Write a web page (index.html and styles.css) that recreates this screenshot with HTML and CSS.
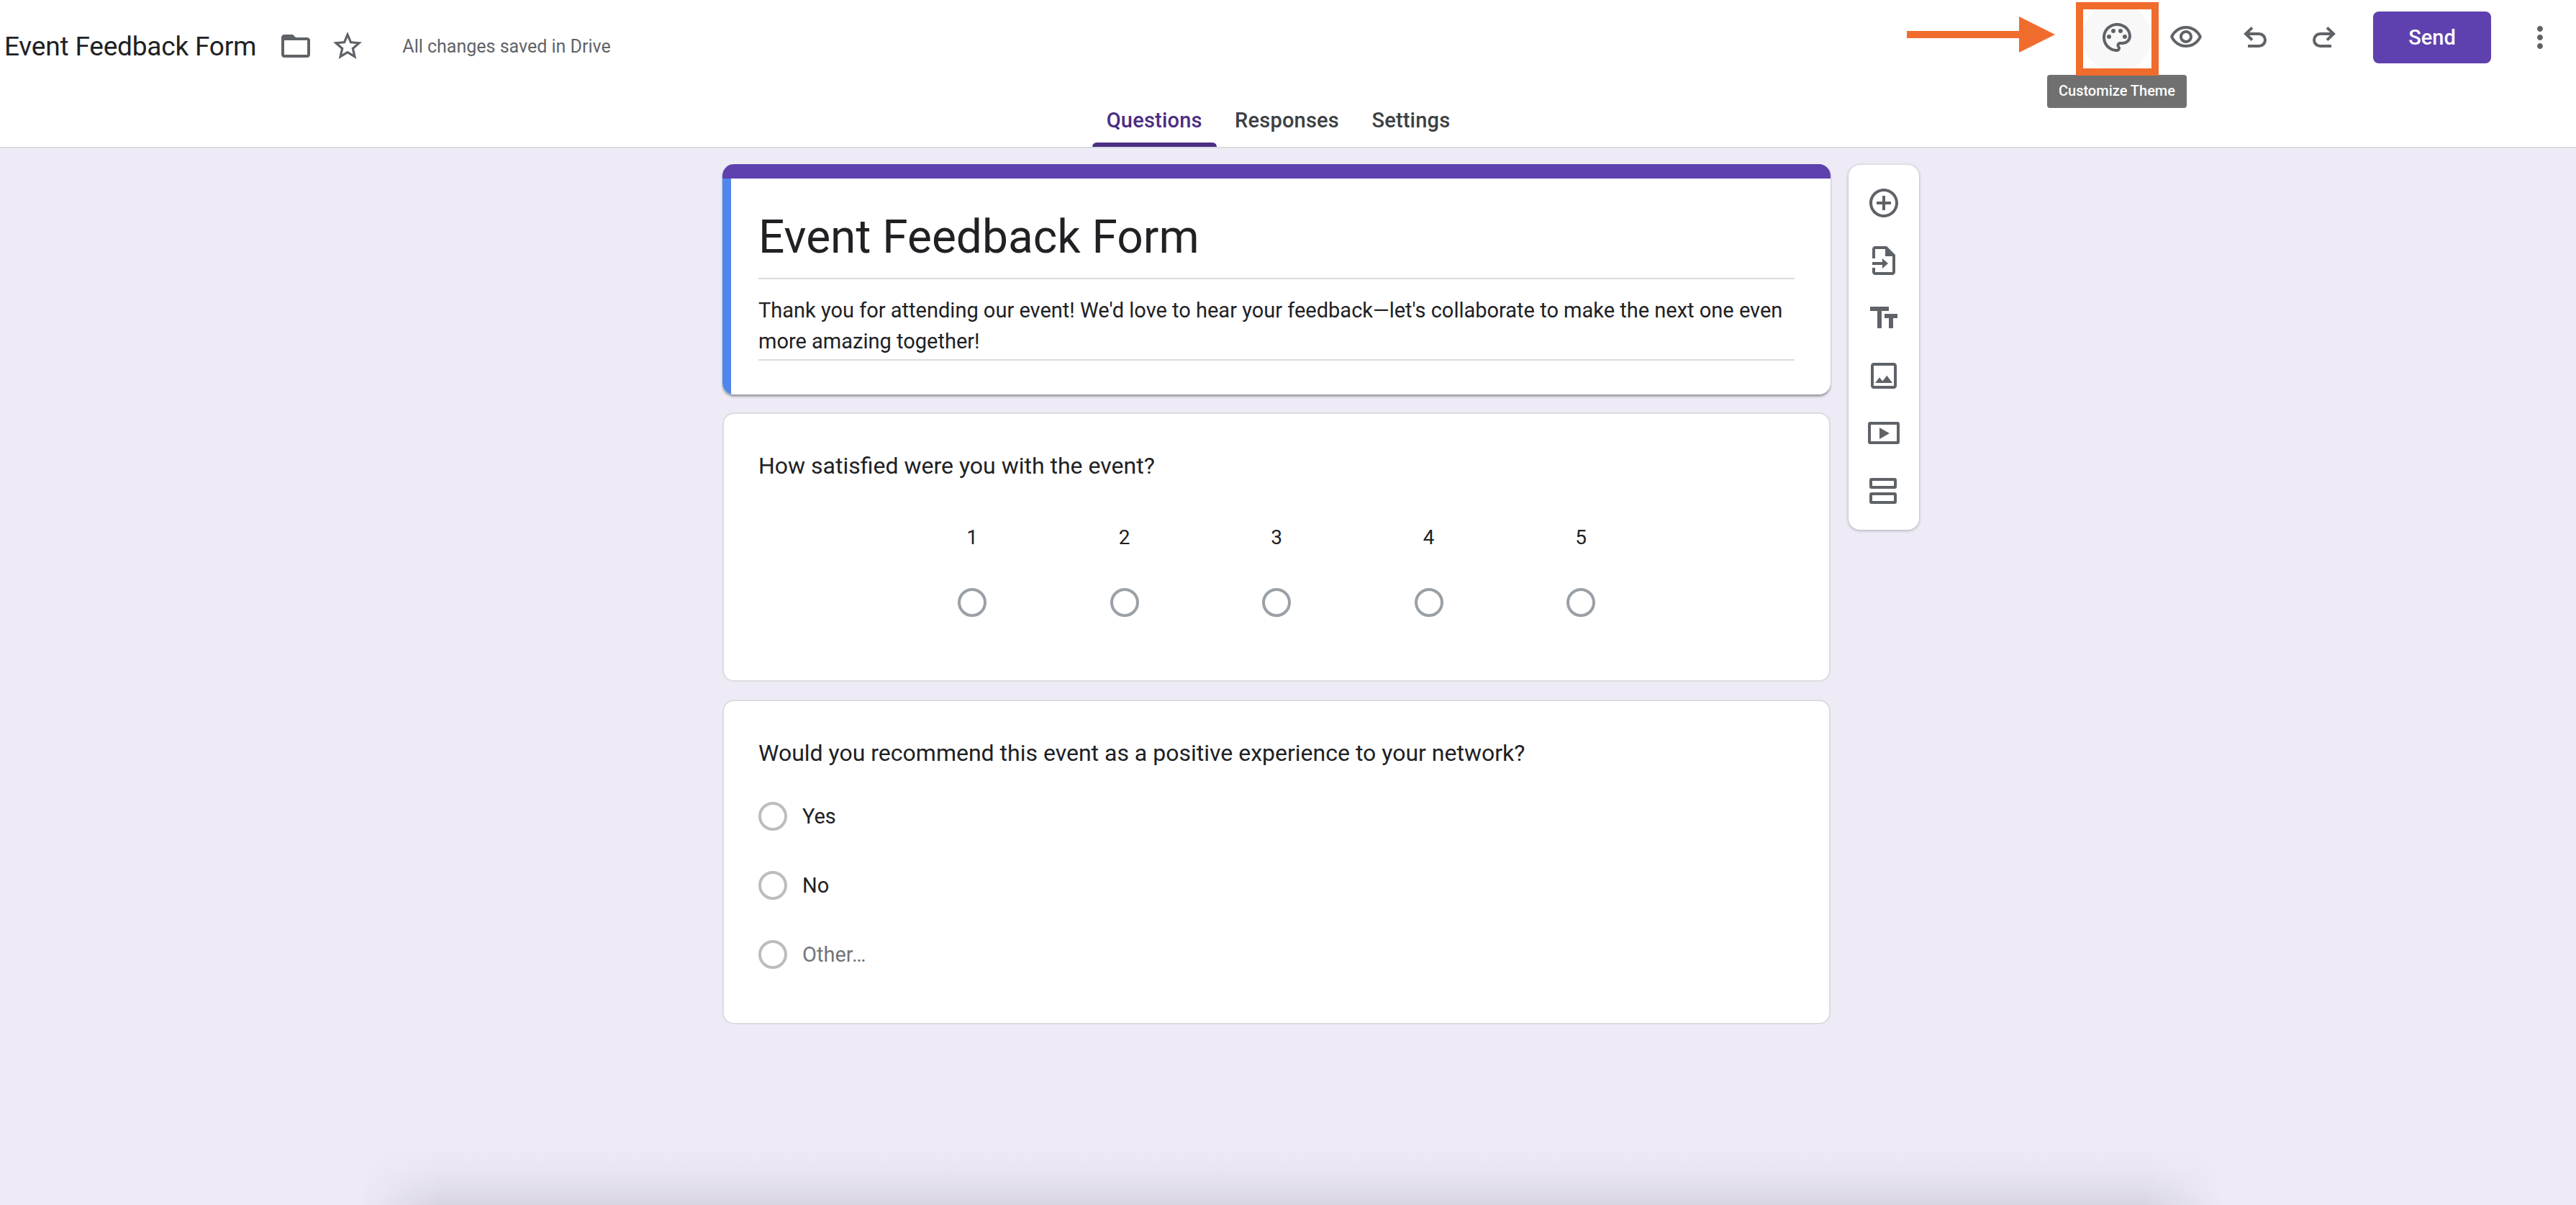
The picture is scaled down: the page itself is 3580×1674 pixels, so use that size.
FILE: index.html
```html
<!DOCTYPE html>
<html lang="en">
<head>
    <meta charset="UTF-8">
    <title>Event Feedback Form</title>
    <link rel="stylesheet" href="styles.css">
</head>
<body>
    <div class="header">
        <div class="topbar">
            <div class="doc-info">
                <span class="doc-title">Event Feedback Form</span>
                <svg class="icon folder-icon" viewBox="0 0 24 24"><path d="M20 6h-8l-2-2H4c-1.1 0-2 .9-2 2v12c0 1.1.9 2 2 2h16c1.1 0 2-.9 2-2V8c0-1.1-.9-2-2-2zm0 12H4V8h16v10z"/></svg>
                <svg class="icon star-icon" viewBox="0 0 24 24"><path d="M22 9.24l-7.19-.62L12 2 9.19 8.63 2 9.24l5.46 4.73L5.82 21 12 17.27 18.18 21l-1.63-7.03L22 9.24zM12 15.4l-3.76 2.27 1-4.28-3.32-2.88 4.38-.38L12 6.1l1.71 4.04 4.38.38-3.32 2.88 1 4.28L12 15.4z"/></svg>
                <span class="save-status">All changes saved in Drive</span>
            </div>
            <div class="actions">
                <div class="icon-btn hover">
                    <svg class="icon" viewBox="0 0 24 24"><path d="M12 22C6.49 22 2 17.51 2 12S6.49 2 12 2s10 4.04 10 9c0 3.31-2.69 6-6 6h-1.77c-.28 0-.5.22-.5.5 0 .12.05.23.13.33.41.47.64 1.06.64 1.67 0 1.38-1.12 2.5-2.5 2.5zm0-18c-4.41 0-8 3.59-8 8s3.59 8 8 8c.28 0 .5-.22.5-.5 0-.16-.08-.28-.14-.35-.41-.46-.63-1.05-.63-1.65 0-1.38 1.12-2.5 2.5-2.5H16c2.21 0 4-1.79 4-4 0-3.86-3.59-7-8-7z"/><circle cx="6.5" cy="11.5" r="1.5"/><circle cx="9.5" cy="7.5" r="1.5"/><circle cx="14.5" cy="7.5" r="1.5"/><circle cx="17.5" cy="11.5" r="1.5"/></svg>
                </div>
                <div class="icon-btn">
                    <svg class="icon" viewBox="0 0 24 24"><path d="M12 6a9.77 9.77 0 0 1 8.82 5.5C19.17 14.87 15.79 17 12 17s-7.17-2.13-8.82-5.5A9.77 9.77 0 0 1 12 6m0-2C7 4 2.73 7.11 1 11.5 2.73 15.89 7 19 12 19s9.27-3.11 11-7.5C21.27 7.11 17 4 12 4zm0 5a2.5 2.5 0 0 1 0 5 2.5 2.5 0 0 1 0-5m0-2c-2.48 0-4.5 2.02-4.5 4.5S9.52 16 12 16s4.5-2.02 4.5-4.5S14.48 7 12 7z"/></svg>
                </div>
                <div class="icon-btn">
                    <svg class="icon" viewBox="0 0 24 24"><path class="line" d="M10 5.2L5.5 9.5 10 13.8M5.5 9.5h9.25a4.25 4.25 0 0 1 0 8.5H7"/></svg>
                </div>
                <div class="icon-btn">
                    <svg class="icon" viewBox="0 0 24 24"><path class="line" d="M14 5.2l4.5 4.3-4.5 4.3M18.5 9.5H9.25a4.25 4.25 0 0 0 0 8.5H17"/></svg>
                </div>
                <button class="send-btn">Send</button>
                <div class="icon-btn more-btn">
                    <svg class="icon" viewBox="0 0 24 24"><path d="M12 8c1.1 0 2-.9 2-2s-.9-2-2-2-2 .9-2 2 .9 2 2 2zm0 2c-1.1 0-2 .9-2 2s.9 2 2 2 2-.9 2-2-.9-2-2-2zm0 6c-1.1 0-2 .9-2 2s.9 2 2 2 2-.9 2-2-.9-2-2-2z"/></svg>
                </div>
            </div>
        </div>
        <div class="tabs">
            <div class="tab active">Questions</div>
            <div class="tab">Responses</div>
            <div class="tab">Settings</div>
        </div>

        <div class="tooltip">Customize Theme</div>
        <svg class="callout-arrow" viewBox="0 0 206 50"><polygon points="0,20 156,20 156,0 206,25 156,50 156,30 0,30"/></svg>
        <div class="callout-box"></div>
    </div>

    <div class="main">
        <div class="form">
            <div class="card title-card">
                <div class="title-band"></div>
                <div class="title-body">
                    <h1 class="form-title">Event Feedback Form</h1>
                    <p class="form-desc">Thank you for attending our event! We'd love to hear your feedback—let's collaborate to make the next one even more amazing together!</p>
                </div>
            </div>

            <div class="card question scale-question">
                <div class="question-text">How satisfied were you with the event?</div>
                <div class="scale">
                    <div class="scale-item"><span>1</span><div class="radio dark"></div></div>
                    <div class="scale-item"><span>2</span><div class="radio dark"></div></div>
                    <div class="scale-item"><span>3</span><div class="radio dark"></div></div>
                    <div class="scale-item"><span>4</span><div class="radio dark"></div></div>
                    <div class="scale-item"><span>5</span><div class="radio dark"></div></div>
                </div>
            </div>

            <div class="card question choice-question">
                <div class="question-text">Would you recommend this event as a positive experience to your network?</div>
                <div class="option"><div class="radio"></div><span>Yes</span></div>
                <div class="option"><div class="radio"></div><span>No</span></div>
                <div class="option other"><div class="radio"></div><span>Other…</span></div>
            </div>
        </div>

        <div class="side-panel">
            <svg class="icon" viewBox="0 0 24 24"><path d="M13 7h-2v4H7v2h4v4h2v-4h4v-2h-4V7zm-1-5C6.48 2 2 6.48 2 12s4.48 10 10 10 10-4.48 10-10S17.52 2 12 2zm0 18c-4.41 0-8-3.59-8-8s3.59-8 8-8 8 3.59 8 8-3.59 8-8 8z"/></svg>
            <svg class="icon" viewBox="0 0 24 24"><path d="M4 10.5V4c0-1.1.9-2 2-2h8l6 6v12c0 1.1-.9 2-2 2H6c-1.1 0-2-.9-2-2v-3h2v3h12V9h-5V4H6v6.5z"/><path d="M13.5 2.5l6 6h-6z"/><path d="M4 15v-2h7v-2.5l4 3.5-4 3.5V15z"/></svg>
            <svg class="icon" viewBox="0 0 24 24"><path d="M2.5 4v3h5v12h3V7h5V4h-13zm19 5h-9v3h3v7h3v-7h3V9z"/></svg>
            <svg class="icon" viewBox="0 0 24 24"><path d="M19 5v14H5V5h14m0-2H5c-1.1 0-2 .9-2 2v14c0 1.1.9 2 2 2h14c1.1 0 2-.9 2-2V5c0-1.1-.9-2-2-2zm-4.86 8.86l-3 3.87L9 13.14 6 17h12l-3.86-5.14z"/></svg>
            <svg class="icon" viewBox="0 0 24 24"><rect class="line" x="2" y="5" width="20" height="13.5" rx=".5"/><path d="M9 8v8l7-4z"/></svg>
            <svg class="icon" viewBox="0 0 24 24"><rect class="line" x="3" y="4" width="17" height="5.5" rx=".5"/><rect class="line" x="3" y="14" width="17" height="6" rx=".5"/></svg>
        </div>
    </div>

    <div class="page-shadow"></div>
</body>
</html>
```

FILE: styles.css
```css
* {
    box-sizing: border-box;
}
html, body {
    margin: 0;
    height: 100%;
}
body {
    position: relative;
    height: 1674px;
    overflow: hidden;
    font-family: Roboto, "Noto Sans", Arial, sans-serif;
    background-color: #eeebf6;
    color: #202124;
}
.icon {
    width: 48px;
    height: 48px;
    flex: none;
    fill: #5f6368;
}
.icon .line {
    fill: none;
    stroke: #5f6368;
    stroke-width: 2;
}

/* top bar */
.header {
    position: relative;
    height: 206px;
    background: #fff;
    border-bottom: 2px solid #dadce0;
}
.topbar {
    display: flex;
    justify-content: space-between;
    align-items: flex-start;
    height: 108px;
}
.doc-info {
    display: flex;
    align-items: center;
    height: 48px;
    margin-top: 40px;
    padding-left: 6px;
}
.doc-title {
    font-size: 37px;
    letter-spacing: -0.2px;
    margin-right: 31px;
}
.star-icon {
    margin-left: 24px;
}
.save-status {
    margin-left: 52px;
    font-size: 25px;
    color: #5f6368;
}
.actions {
    display: flex;
    align-items: center;
    margin-top: 4px;
    padding-right: 2px;
}
.icon-btn {
    display: flex;
    align-items: center;
    justify-content: center;
    width: 96px;
    height: 96px;
    border-radius: 50%;
}
.icon-btn.hover {
    background: #f8f8f8;
}
.send-btn {
    width: 164px;
    height: 72px;
    margin-left: 20px;
    border: none;
    border-radius: 8px;
    background: #5e41ae;
    color: #fff;
    font-family: inherit;
    font-size: 29px;
    font-weight: 500;
}
.more-btn {
    margin-left: 20px;
}
.tabs {
    display: flex;
    justify-content: center;
    gap: 5.5px;
    padding-right: 27px;
}
.tab {
    display: flex;
    flex-direction: column;
    height: 96px;
    padding: 40px 20px 0;
    color: #3c4043;
    font-size: 29px;
    font-weight: 500;
    letter-spacing: 0.2px;
    line-height: 38px;
}
.tab.active {
    color: #4b2e83;
}
.tab.active::after {
    content: "";
    height: 6px;
    margin: auto -20px 0;
    border-radius: 6px 6px 0 0;
    background: #4b2e83;
}

/* annotation over the bar */
.tooltip {
    position: absolute;
    left: 2845px;
    top: 104px;
    width: 194px;
    height: 46px;
    border-radius: 4px;
    background: #707070;
    color: #fff;
    font-size: 20px;
    font-weight: 500;
    line-height: 44px;
    text-align: center;
}
.callout-box {
    position: absolute;
    left: 2885px;
    top: 3px;
    width: 115px;
    height: 102px;
    border: 10px solid #f06c2d;
}
.callout-arrow {
    position: absolute;
    left: 2650px;
    top: 23px;
    width: 206px;
    height: 50px;
    fill: #f06c2d;
}

/* form */
.main {
    display: grid;
    grid-template-columns: 1fr 1540px 1fr;
    padding: 22px 32px 0 0;
}
.form {
    grid-column: 2;
    display: flex;
    flex-direction: column;
    gap: 25px;
}
.card {
    background: #fff;
    border: 2px solid #dadce0;
    border-radius: 16px;
}
.title-card {
    height: 320px;
    border: none;
    overflow: hidden;
    box-shadow: 0 3px 3px rgba(60, 64, 67, 0.45);
}
.title-band {
    height: 20px;
    background: #5e41ae;
}
.title-body {
    height: 300px;
    padding: 0 50px 0 38px;
    border-left: 12px solid #4f86ec;
}
.form-title {
    margin: 0;
    height: 140px;
    padding-top: 42px;
    border-bottom: 2px solid #dadce0;
    font-size: 64px;
    font-weight: 400;
    line-height: 80px;
}
.form-desc {
    margin: 0;
    padding-top: 22px;
    height: 113px;
    border-bottom: 2px solid #dadce0;
    font-size: 29px;
    line-height: 43px;
}
.question {
    padding: 0 48px;
}
.question-text {
    font-size: 32px;
    line-height: 44px;
}
.scale-question {
    height: 374px;
    padding-top: 50px;
}
.scale {
    display: flex;
    justify-content: center;
    margin-top: 58px;
}
.scale-item {
    display: flex;
    flex-direction: column;
    align-items: center;
    gap: 50px;
    width: 211.5px;
    font-size: 28px;
    line-height: 40px;
}
.radio {
    flex: none;
    width: 40px;
    height: 40px;
    border: 4px solid #bdbdbd;
    border-radius: 50%;
}
.radio.dark {
    border-color: #9aa0a6;
}
.choice-question {
    height: 451px;
    padding-top: 50px;
}
.option {
    display: flex;
    align-items: center;
    gap: 21px;
    height: 96px;
    font-size: 29px;
}
.choice-question .question-text {
    margin-bottom: 18px;
}
.option.other {
    color: #70757a;
}
.side-panel {
    grid-column: 3;
    justify-self: start;
    display: flex;
    flex-direction: column;
    align-items: center;
    gap: 32px;
    width: 98px;
    height: 507px;
    margin: 1px 0 0 25px;
    padding-top: 29px;
    background: #fff;
    border-radius: 16px;
    box-shadow: 0 1px 4px rgba(60, 64, 67, 0.4);
}

/* soft shadow rising from the bottom of the window */
.page-shadow {
    position: absolute;
    left: 500px;
    bottom: 0;
    width: 2590px;
    height: 84px;
    background: linear-gradient(to bottom, rgba(30, 20, 60, 0), rgba(30, 20, 60, 0.02) 40%, rgba(30, 20, 60, 0.06) 72%, rgba(30, 20, 60, 0.1));
    -webkit-mask-image: linear-gradient(to right, transparent, #000 110px, #000 2480px, transparent);
    mask-image: linear-gradient(to right, transparent, #000 110px, #000 2480px, transparent);
}
```
